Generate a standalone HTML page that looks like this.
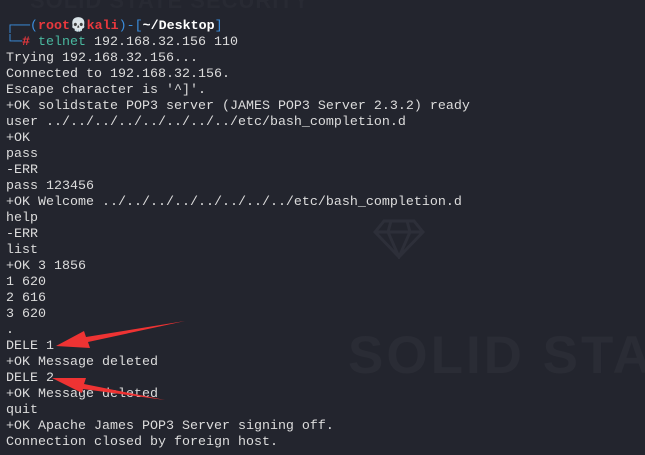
<!DOCTYPE html>
<html><head><meta charset="utf-8"><style>
html,body{margin:0;padding:0;}
body{width:645px;height:455px;background:#23252e;overflow:hidden;position:relative;font-family:"Liberation Mono",monospace;}
.wm{position:absolute;font-family:"Liberation Sans",sans-serif;font-weight:bold;color:#2a2c35;white-space:nowrap;}
pre{position:absolute;left:6px;top:19px;margin:0;font-family:"Liberation Mono",monospace;font-size:13.33px;line-height:16px;color:#dcdcdc;}
.b{color:#3b8ede}.r{color:#e8383d;font-weight:bold}.w{color:#fff;font-weight:bold}.g{color:#49b89f}
</style></head><body>
<div class="wm" style="left:30px;top:-12px;font-size:22px;letter-spacing:1px;color:#282a33;">SOLID STATE SECURITY</div>
<div class="wm" style="left:348px;top:325px;font-size:53px;letter-spacing:3px;width:297px;overflow:hidden;">SOLID STATE</div>
<svg style="position:absolute;left:373px;top:219px" width="52" height="40" viewBox="0 0 52 40"><g fill="none" stroke="#2d2f39" stroke-width="3"><path d="M11 2H41L50 13L26 38L2 13Z M2 13H50 M18 2L15 13L26 38L37 13L34 2"/></g></svg>
<pre><span class="b">┌──(</span><span class="r">root💀kali</span><span class="b">)-[</span><span class="w">~/Desktop</span><span class="b">]</span>
<span class="b">└─</span><span class="r">#</span> <span class="g">telnet</span> 192.168.32.156 110
Trying 192.168.32.156...
Connected to 192.168.32.156.
Escape character is '^]'.
+OK solidstate POP3 server (JAMES POP3 Server 2.3.2) ready
user ../../../../../../../../etc/bash_completion.d
+OK
pass
-ERR
pass 123456
+OK Welcome ../../../../../../../../etc/bash_completion.d
help
-ERR
list
+OK 3 1856
1 620
2 616
3 620
.
DELE 1
+OK Message deleted
DELE 2
+OK Message deleted
quit
+OK Apache James POP3 Server signing off.
Connection closed by foreign host.</pre>
<svg style="position:absolute;left:0;top:0" width="645" height="455"><g fill="#ee3333">
<path d="M185 321 L86 337 L84 331 L56 346 L90 348 L88 342 Z"/>
<path d="M165 400 L84 384 L86 378 L52 378 L82 393 L83 389 Z"/>
</g></svg>
</body></html>
